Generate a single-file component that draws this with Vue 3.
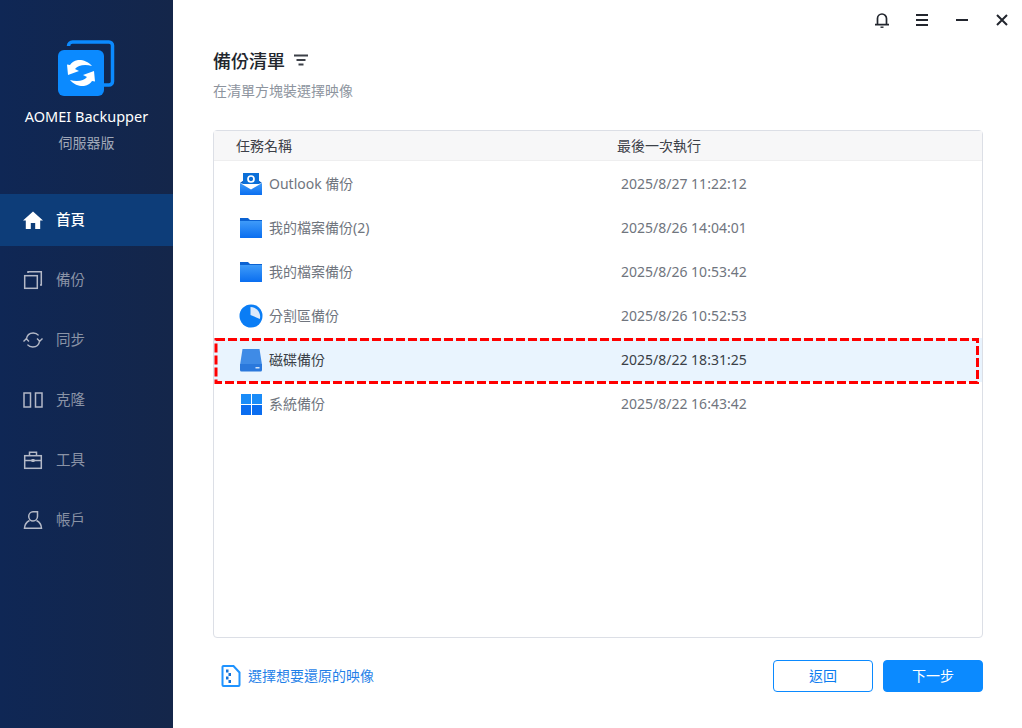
<script setup>
import { ref } from "vue";

const navItems = ref([
  { key: "home", label: "首頁" },
  { key: "backup", label: "備份" },
  { key: "sync", label: "同步" },
  { key: "clone", label: "克隆" },
  { key: "tools", label: "工具" },
  { key: "account", label: "帳戶" },
]);

const tasks = ref([
  { icon: "outlook", name: "Outlook 備份", time: "2025/8/27 11:22:12" },
  { icon: "folder", name: "我的檔案備份(2)", time: "2025/8/26 14:04:01" },
  { icon: "folder", name: "我的檔案備份", time: "2025/8/26 10:53:42" },
  { icon: "partition", name: "分割區備份", time: "2025/8/26 10:52:53" },
  { icon: "disk", name: "磁碟備份", time: "2025/8/22 18:31:25", selected: true },
  { icon: "windows", name: "系統備份", time: "2025/8/22 16:43:42" },
]);
</script>

<template>
  <div class="window">
    <aside class="sidebar">
      <div class="brand">
        <svg class="logo" width="58" height="58" viewBox="0 0 58 58">
          <path d="M10.500 6a4 4 0 0 1 4-4h36.500a3.500 3.500 0 0 1 3.500 3.500v36a3.500 3.500 0 0 1-3.500 3.500h-5.500" fill="none" stroke="#0b8aff" stroke-width="3.500" />
          <rect x="0" y="10" width="46" height="46" rx="6" fill="#0b8aff" />
          <path d="M34 26C30 21 24 19.500 20 20 16 20.500 13 23 12 25L9 24.500 10 35 21 31 17 29C20 25 27 24 34 26z" fill="#fff" />
          <path d="M12 40C16 45 22 46.500 26 46 30 45.500 33 43 34 41L37 41.500 36 31 25 35 29 37C26 41 19 42 12 40z" fill="#fff" />
        </svg>
        <div class="brand-name">AOMEI Backupper</div>
        <div class="brand-edition">伺服器版</div>
      </div>

      <nav class="nav">
        <div
          v-for="item in navItems"
          :key="item.key"
          class="nav-item"
          :class="{ active: item.key === 'home' }"
        >
          <svg class="nav-icon" width="20" height="20" viewBox="0 0 20 20" fill="none" stroke="#b4b9c7" stroke-width="1.400">
            <path v-if="item.key === 'home'" d="M10 1.500L0 10.500h2.800V19h5V13h4.400v6h5v-8.500H20z" fill="#fff" stroke="none" />
            <template v-else-if="item.key === 'backup'">
              <rect x="1.700" y="5.700" width="12.600" height="12.600" stroke-width="1.500" />
              <path d="M5 3V1.700h13.300V15H17" stroke-width="1.500" />
            </template>
            <template v-else-if="item.key === 'sync'">
              <path d="M3.300 9.500C3.800 5.600 6.600 3 10.300 3c2.200 0 4 .9 5.300 2.400" />
              <path d="M16.700 10.500c-.5 3.900-3.300 6.500-7 6.500-2.200 0-4-.9-5.300-2.400" />
              <path d="M0.500 11.500L3.300 8.800 6 11.500M19.500 8.500l-2.800 2.700L14 8.500" />
            </template>
            <template v-else-if="item.key === 'clone'">
              <rect x="1" y="3" width="6.500" height="14" stroke-width="1.500" />
              <rect x="12.500" y="3" width="6.500" height="14" stroke-width="1.500" />
            </template>
            <template v-else-if="item.key === 'tools'">
              <rect x="1.700" y="5.700" width="16.600" height="12.600" stroke-width="1.500" />
              <path d="M6.500 5.500V2.200h7v3.300M1.700 10.500h16.600" stroke-width="1.500" />
              <rect x="8.500" y="9" width="3" height="3" fill="#b4b9c7" stroke="none" />
            </template>
            <template v-else>
              <path d="M14.500 1.800H10A4.500 4.500 0 0 0 5.700 6.300c0 2.700 2 4.700 4.300 4.700 2.700 0 4.500-2.200 4.500-4.700z" stroke-width="1.500" />
              <path d="M6.500 10.500C3.500 12 1.600 14.500 1.500 18.300h17c-.1-3.800-2-6.300-5-7.800" stroke-width="1.500" />
            </template>
          </svg>
          <span class="nav-label">{{ item.label }}</span>
        </div>
      </nav>
    </aside>

    <main class="main">
      <div class="titlebar">
        <svg width="14" height="16" viewBox="1 0 14 16" fill="none" stroke="#22262e" stroke-width="1.700">
          <path d="M3.500 12.500V6.500a4.500 4.500 0 0 1 9 0v6M1 12.700h14" />
          <path d="M6.500 15.200h3" stroke-width="1.400" />
        </svg>
        <svg width="14" height="14" viewBox="0 0 14 14" stroke="#22262e" stroke-width="2">
          <path d="M1 2h12M1 7h12M1 12h12" />
        </svg>
        <svg width="14" height="14" viewBox="0 0 14 14" stroke="#22262e" stroke-width="2">
          <path d="M1 7h12" />
        </svg>
        <svg width="14" height="14" viewBox="0 0 14 14" stroke="#22262e" stroke-width="2">
          <path d="M2 2l10 10M12 2L2 12" />
        </svg>
      </div>

      <div class="content">
        <div class="heading">
          <h1>備份清單</h1>
          <svg width="14" height="12" viewBox="0 0 14 12" stroke="#3c4048" stroke-width="1.800">
            <path d="M0 1.500h14M2.500 6h9M4.500 10.500h5" />
          </svg>
        </div>
        <p class="subtitle">在清單方塊裝選擇映像</p>

        <div class="table">
          <div class="table-head">
            <span class="col-name">任務名稱</span>
            <span>最後一次執行</span>
          </div>
          <div
            v-for="task in tasks"
            :key="task.time"
            class="row"
            :class="{ selected: task.selected }"
          >
            <svg class="task-icon" width="24" height="24" viewBox="0 0 24 24">
              <defs>
                <linearGradient id="tile" x1="0" y1="0" x2="0" y2="1">
                  <stop offset="0" stop-color="#3f9bf8" />
                  <stop offset="1" stop-color="#0a6ef0" />
                </linearGradient>
              </defs>
              <template v-if="task.icon === 'outlook'">
                <path d="M4 1h16v11H4z" fill="#0b6fd8" />
                <circle cx="12" cy="7" r="3" fill="none" stroke="#fff" stroke-width="1.700" />
                <path d="M1 11l3-2.200v3zM23 11l-3-2.200v3z" fill="#0a5cc0" />
                <path d="M1 11l11 6.500L23 11v11.500a.5.500 0 0 1-.5.500h-21a.5.500 0 0 1-.5-.5z" fill="url(#tile)" />
              </template>
              <template v-else-if="task.icon === 'folder'">
                <path d="M1 2h8l2 2h12v3H1z" fill="#0b62d2" />
                <path d="M1 5h22v16.500a.5.500 0 0 1-.5.500h-21a.5.500 0 0 1-.5-.5z" fill="url(#tile)" />
              </template>
              <template v-else-if="task.icon === 'partition'">
                <circle cx="12" cy="12" r="11.500" fill="#0a7df5" />
                <path d="M11.500 3A9.500 9.500 0 0 1 20.800 15L11.500 11z" fill="#dce9fa" />
              </template>
              <template v-else-if="task.icon === 'disk'">
                <path d="M3.500 1h17l2.500 16H1z" fill="#3f8be6" />
                <path d="M1 16h22v6a1.500 1.500 0 0 1-1.500 1.500h-19A1.500 1.500 0 0 1 1 22z" fill="#2a78dc" />
                <rect x="16.500" y="19" width="4" height="1.500" fill="#cfe3fb" />
              </template>
              <template v-else>
                <rect x="2" y="2" width="10" height="10" fill="#1a8cf8" />
                <rect x="13" y="2" width="10" height="10" fill="#1a8cf8" />
                <rect x="2" y="13" width="10" height="10" fill="#0a6df0" />
                <rect x="13" y="13" width="10" height="10" fill="#0a6df0" />
              </template>
            </svg>
            <span class="task-name">{{ task.name }}</span>
            <span class="task-time">{{ task.time }}</span>
            <svg v-if="task.selected" class="marker" width="766" height="48" viewBox="0 0 766 48" fill="none">
              <rect x="2" y="2.500" width="761.500" height="43" stroke="#f00" stroke-width="3" stroke-dasharray="9 3" />
            </svg>
          </div>
        </div>

        <div class="footer">
          <a class="pick-image">
            <svg width="20" height="22" viewBox="0 0 20 22" fill="none" stroke="#1f93ff" stroke-width="2">
              <path d="M2.500 1h10l6 6.500V20a1 1 0 0 1-1 1h-15a1 1 0 0 1-1-1V2a1 1 0 0 1 1-1z" />
              <path d="M5 4.500h2.500v3H5zM7.500 8h2.500v3H7.500zM5 11.500h2.500v3H5zM7.500 15h2.500v3H7.500z" fill="#1272d8" stroke="none" />
            </svg>
            <span class="pick-label">選擇想要還原的映像</span>
          </a>
          <div class="actions">
            <button class="btn btn-outline">返回</button>
            <button class="btn btn-primary">下一步</button>
          </div>
        </div>
      </div>
    </main>
  </div>
</template>

<style scoped>
.window {
  display: flex;
  width: 1022px;
  height: 728px;
  overflow: hidden;
  font-family: "Noto Sans", "Noto Sans CJK TC", sans-serif;
  background: #fff;
}
.sidebar {
  width: 173px;
  flex-shrink: 0;
  background: linear-gradient(90deg, #0f2755 0%, #14264a 100%);
}
.brand {
  height: 194px;
  display: flex;
  flex-direction: column;
  align-items: center;
}
.logo {
  margin-top: 40px;
  margin-left: 1px;
}
.brand-name {
  margin-top: 6px;
  font-size: 14.500px;
  line-height: 24px;
  color: #fff;
}
.brand-edition {
  margin-top: 3px;
  font-size: 14px;
  line-height: 24px;
  color: #a0a8b8;
}
.nav-item {
  display: flex;
  align-items: center;
  height: 52px;
  margin-bottom: 8px;
  padding-left: 23px;
  font-size: 14.500px;
  color: #8a93a6;
}
.nav-item.active {
  background: #0d3d79;
  color: #fff;
  font-weight: 500;
}
.nav-icon {
  margin-right: 13px;
}
.nav-label {
  padding-bottom: 4px;
}
.main {
  flex: 1;
  min-width: 0;
}
.titlebar {
  display: flex;
  justify-content: flex-end;
  align-items: center;
  gap: 26px;
  height: 40px;
  padding-right: 13px;
}
.content {
  padding: 0 39px 0 40px;
}
.heading {
  display: flex;
  align-items: center;
  gap: 9px;
  height: 40px;
}
.heading h1 {
  margin: 0;
  font-size: 18px;
  font-weight: 500;
  color: #22262e;
}
.subtitle {
  margin: 1px 0 0;
  font-size: 14px;
  line-height: 20px;
  color: #8d949e;
}
.table {
  height: 508px;
  margin-top: 29px;
  box-sizing: border-box;
  border: 1px solid #dcdfe6;
  border-radius: 4px;
}
.table-head {
  display: flex;
  align-items: center;
  height: 30px;
  margin-bottom: 1px;
  padding-bottom: 2px;
  box-sizing: border-box;
  background: #f7f7f8;
  border-bottom: 1px solid #eeeeef;
  font-size: 14px;
  color: #3c4048;
}
.col-name {
  width: 403px;
  padding-left: 22px;
  box-sizing: border-box;
}
.row {
  position: relative;
  display: flex;
  align-items: center;
  height: 44px;
  padding-left: 25px;
  font-size: 14px;
  color: #70757e;
}
.row.selected {
  background: #e9f4fe;
  color: #3a3f47;
}
.task-icon {
  flex-shrink: 0;
}
.task-name {
  width: 352px;
  margin-left: 6px;
  padding-bottom: 2px;
}
.task-time {
  padding-bottom: 2px;
}
.marker {
  position: absolute;
  left: 0;
  top: -1px;
}
.footer {
  display: flex;
  justify-content: space-between;
  align-items: center;
  margin-top: 22px;
}
.pick-image {
  display: flex;
  align-items: center;
  gap: 7px;
  padding-left: 8px;
  font-size: 14px;
  color: #1f7fe8;
}
.pick-label {
  padding-bottom: 2px;
}
.actions {
  display: flex;
  gap: 10px;
}
.btn {
  width: 100px;
  height: 32px;
  padding: 0 0 3px;
  border-radius: 4px;
  font-family: inherit;
  font-size: 14px;
}
.btn-outline {
  background: #fff;
  border: 1px solid #0b8aff;
  color: #0b7cf0;
}
.btn-primary {
  background: #0b8aff;
  border: 1px solid #0b8aff;
  color: #fff;
}
</style>
